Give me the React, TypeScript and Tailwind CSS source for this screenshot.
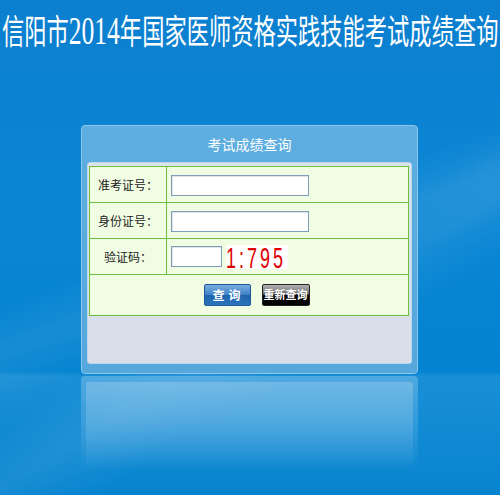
import React from "react";

const cjk = "font-['Noto_Sans_CJK_SC','Noto_Sans',sans-serif]";

const rows = [
  { label: "准考证号：", name: "zkzh" },
  { label: "身份证号：", name: "sfzh" },
];

function Field({ wide = true }: { wide?: boolean }) {
  return (
    <input
      type="text"
      className={`${wide ? "w-[138px]" : "w-[51px]"} h-[21px] bg-white border border-[#7f9db9] shadow-[inset_1px_1px_1px_rgba(0,0,0,0.12)] outline-none`}
    />
  );
}

export default function App() {
  return (
    <div
      className={`relative w-[500px] h-[495px] overflow-hidden bg-[linear-gradient(180deg,#0c7fcf_0%,#0a86d4_40%,#0383d0_75%,#1a8fd6_76%,#0784cf_100%)] ${cjk}`}
    >
      {/* light streaks across the backdrop */}
      <div className="absolute inset-0 bg-[linear-gradient(160deg,transparent_0%,transparent_45%,rgba(255,255,255,0.08)_52%,transparent_60%,transparent_100%)]" />
      <div className="absolute inset-0 bg-[linear-gradient(150deg,transparent_55%,rgba(255,255,255,0.07)_62%,transparent_70%)]" />

      <div className="relative">
        {/* page title */}
        <h1 className="pt-[10px] pl-[3px] h-[56px] whitespace-nowrap origin-left scale-x-[0.655] text-white text-[34px] leading-[40px] font-normal">
          信阳市<span className="font-['Liberation_Serif',serif] text-[39px]">2014</span>年国家医师资格实践技能考试成绩查询
        </h1>

        {/* query panel */}
        <div className="ml-[81px] mt-[69px] w-[337px] h-[249px] rounded-[4px] border border-[#8cc6ea] bg-[linear-gradient(180deg,#5eaee0_0%,#55a7dc_100%)] px-[5px] pb-[9px] flex flex-col">
          <div className="h-[36px] flex items-center justify-center text-white text-[14px]">
            考试成绩查询
          </div>
          <div className="flex-1 rounded-[3px] border border-[#b9d8ee] bg-[linear-gradient(180deg,#dde3ed_0%,#d8dfea_100%)] pt-[3px] px-[1px]">
            <table className="w-[320px] border-collapse bg-[#f1fde3] text-[12px] text-[#222]">
              <tbody>
                {rows.map((r) => (
                  <tr key={r.name} className="h-[36px]">
                    <td className="w-[77px] border border-[#6cc03c] text-center">{r.label}</td>
                    <td className="border border-[#6cc03c] pl-[4px]">
                      <div className="flex items-center pt-[1px]">
                        <Field />
                      </div>
                    </td>
                  </tr>
                ))}
                <tr className="h-[36px]">
                  <td className="border border-[#6cc03c] text-center">验证码：</td>
                  <td className="border border-[#6cc03c] pl-[4px]">
                    <div className="flex items-center gap-[4px]">
                      <Field wide={false} />
                      {/* captcha image */}
                      <div className="w-[62px] h-[24px] bg-white">
                        <span className="block w-[100px] origin-left scale-x-[0.6] whitespace-nowrap font-['Liberation_Sans',sans-serif] text-[30px] leading-[25px] text-[#e00000] tracking-[5px]">
                          1:795
                        </span>
                      </div>
                    </div>
                  </td>
                </tr>
                <tr className="h-[41px]">
                  <td colSpan={2} className="border border-[#6cc03c]">
                    <div className="flex justify-center gap-[11px] pl-[15px] pb-[1px]">
                      <button className="w-[47px] h-[22px] rounded-[2px] border border-[#1f5a98] bg-[linear-gradient(180deg,#79ade0_0%,#3f82c6_48%,#1f64ad_52%,#2a73bb_100%)] text-white text-[12px] font-bold tracking-[4px] pl-[3px]">
                        查询
                      </button>
                      <button className="w-[48px] h-[22px] px-0 whitespace-nowrap rounded-[2px] border border-[#222] bg-[linear-gradient(180deg,#b4b4b4_0%,#6b6b6b_45%,#050505_52%,#000_100%)] text-white text-[11px] font-bold">
                        重新查询
                      </button>
                    </div>
                  </td>
                </tr>
              </tbody>
            </table>
          </div>
        </div>

        {/* panel reflection on the floor */}
        <div className="ml-[81px] mt-[2px] w-[337px] h-[95px] rounded-t-[4px] bg-[linear-gradient(180deg,rgba(140,200,236,0.45)_0%,rgba(120,190,232,0.35)_40%,rgba(80,170,225,0)_100%)] px-[5px] pt-[6px]">
          <div className="h-full rounded-t-[3px] bg-[linear-gradient(180deg,rgba(180,215,240,0.35)_0%,rgba(150,200,235,0.3)_45%,rgba(120,190,232,0)_100%)]" />
        </div>
      </div>
    </div>
  );
}
